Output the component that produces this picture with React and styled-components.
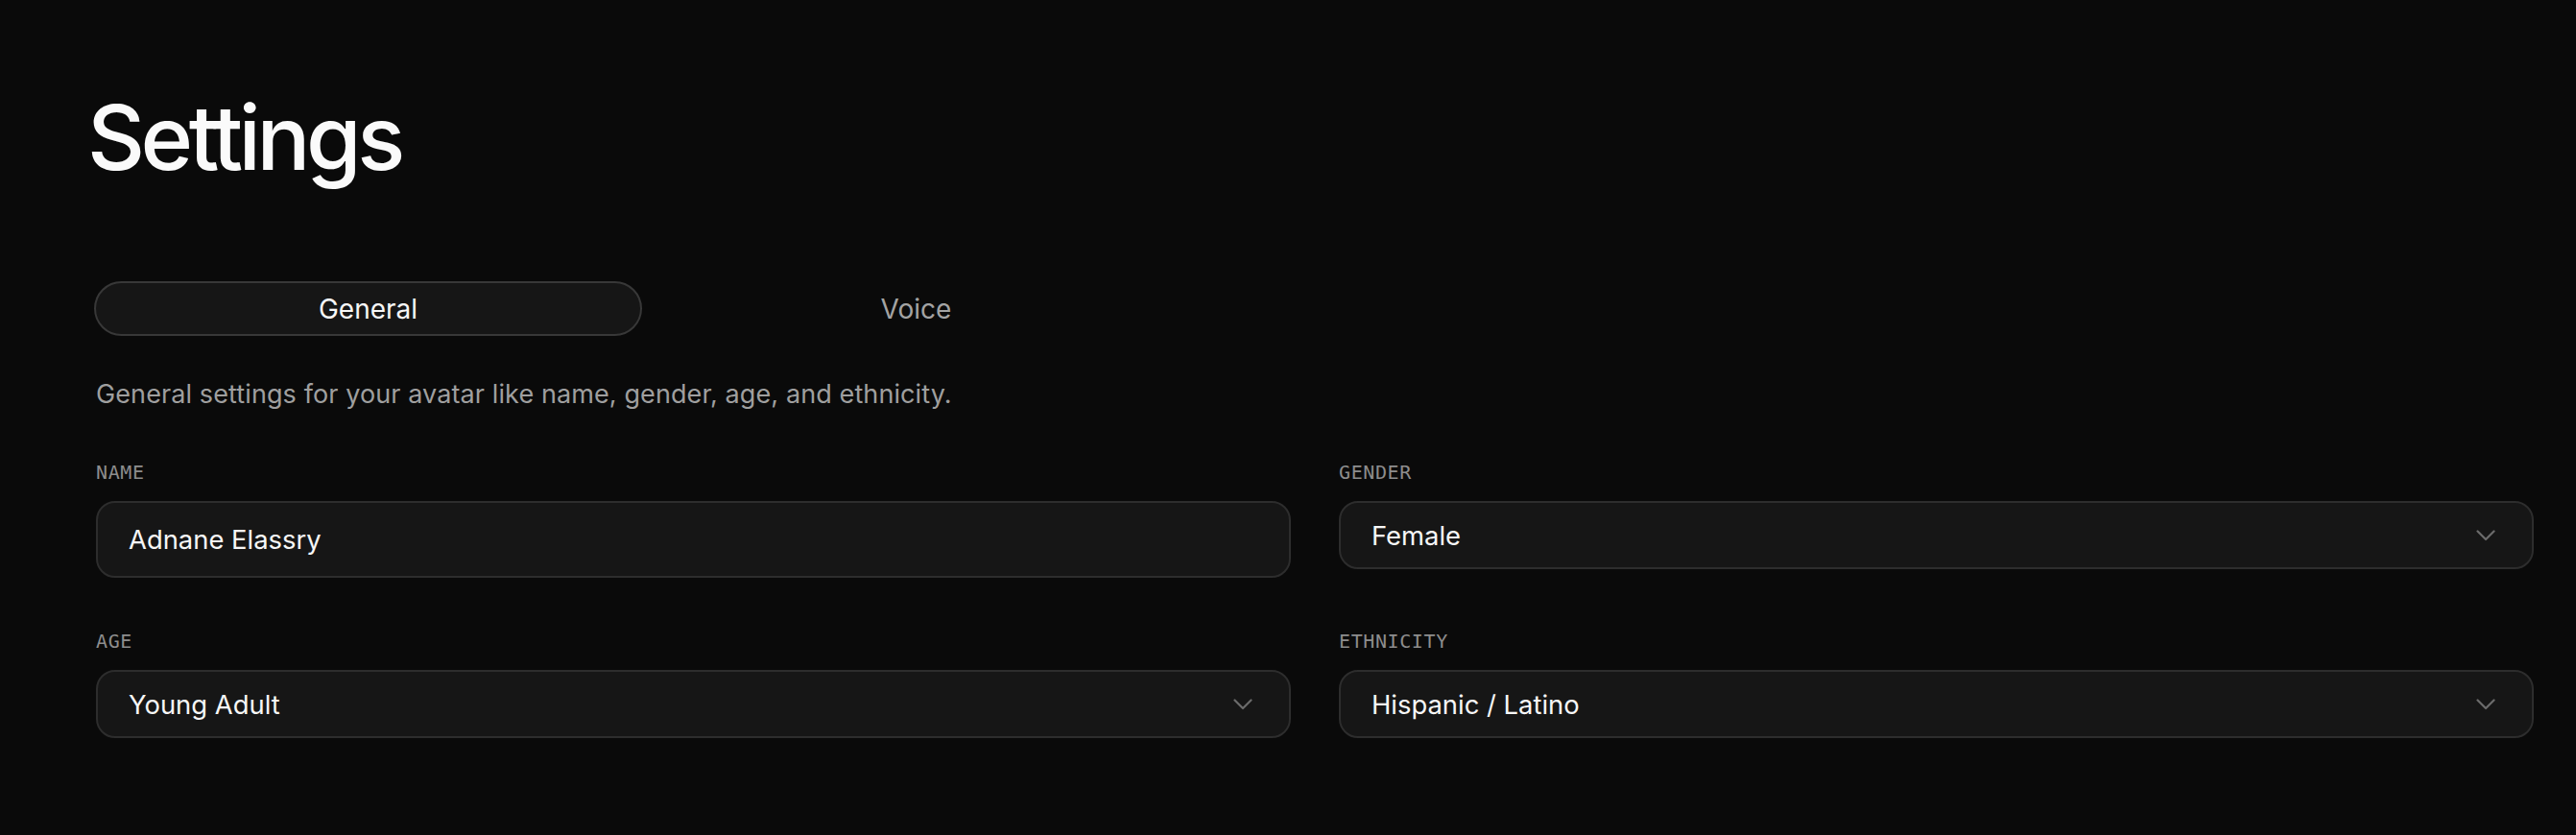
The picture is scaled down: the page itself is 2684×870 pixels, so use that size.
import React, { useState } from 'react';
import styled, { createGlobalStyle } from 'styled-components';

const GlobalStyle = createGlobalStyle`
  html, body {
    margin: 0;
    padding: 0;
    background: #0a0a0a;
  }
  body {
    font-family: Inter, "Noto Sans", "Liberation Sans", sans-serif;
    color: #f5f5f5;
  }
`;

const Page = styled.div`
  box-sizing: border-box;
  padding: 96px 44px 60px 100px;
  background: #0a0a0a;
`;

const Title = styled.h1`
  margin: 0 0 0 -9px;
  font-size: 93px;
  line-height: 94px;
  font-weight: 500;
  letter-spacing: -0.048em;
  color: #fafafa;
`;

const TabList = styled.div`
  display: grid;
  grid-template-columns: 1fr 1fr;
  width: 1142px;
  margin: 103px 0 0 -2px;
`;

const Tab = styled.button`
  height: 57px;
  box-sizing: border-box;
  border-radius: 999px;
  border: 2px solid ${p => (p.$active ? '#383838' : 'transparent')};
  background: ${p => (p.$active ? '#161616' : 'transparent')};
  color: ${p => (p.$active ? '#f7f7f7' : '#a3a3a3')};
  font-family: inherit;
  font-size: 28px;
  font-weight: 400;
  cursor: pointer;
`;

const Description = styled.p`
  margin: 43px 0 0;
  font-size: 27px;
  line-height: 36px;
  letter-spacing: 0.1px;
  color: #9f9f9f;
`;

const FieldGrid = styled.div`
  display: grid;
  grid-template-columns: 1fr 1fr;
  column-gap: 50px;
  row-gap: 54px;
  margin-top: 51px;
  align-items: start;
`;

const Field = styled.div`
  display: flex;
  flex-direction: column;
  gap: 18px;
`;

const Label = styled.label`
  font-family: "DejaVu Sans Mono", "Liberation Mono", monospace;
  font-size: 20px;
  line-height: 24px;
  letter-spacing: 0.03em;
  color: #8d8d8d;
`;

const TextInput = styled.input`
  height: 80px;
  box-sizing: border-box;
  width: 100%;
  padding: 0 32px;
  border-radius: 20px;
  border: 2px solid #2d2d2d;
  background: #161616;
  color: #f7f7f7;
  font-family: inherit;
  font-size: 27.4px;
  outline: none;
`;

const SelectTrigger = styled.button`
  height: 71px;
  box-sizing: border-box;
  width: 100%;
  display: flex;
  align-items: center;
  justify-content: space-between;
  padding: 0 38px 0 32px;
  border-radius: 20px;
  border: 2px solid #2d2d2d;
  background: #161616;
  color: #f7f7f7;
  font-family: inherit;
  font-size: 27.4px;
  cursor: pointer;
`;

const Chevron = () => (
  <svg width="20" height="12" viewBox="0 0 20 12" fill="none">
    <polyline points="1.5,1.5 10,10 18.5,1.5" stroke="#6b6b6b" strokeWidth="2.2" strokeLinecap="round" strokeLinejoin="round" />
  </svg>
);

const Select = ({ value }) => (
  <SelectTrigger type="button">
    <span>{value}</span>
    <Chevron />
  </SelectTrigger>
);

export default function App() {
  const [tab, setTab] = useState('general');
  const [name, setName] = useState('Adnane Elassry');

  return (
    <Page>
      <GlobalStyle />
      <Title>Settings</Title>
      <TabList>
        <Tab $active={tab === 'general'} onClick={() => setTab('general')}>General</Tab>
        <Tab $active={tab === 'voice'} onClick={() => setTab('voice')}>Voice</Tab>
      </TabList>
      <Description>General settings for your avatar like name, gender, age, and ethnicity.</Description>
      <FieldGrid>
        <Field>
          <Label>NAME</Label>
          <TextInput value={name} onChange={e => setName(e.target.value)} />
        </Field>
        <Field>
          <Label>GENDER</Label>
          <Select value="Female" />
        </Field>
        <Field>
          <Label>AGE</Label>
          <Select value="Young Adult" />
        </Field>
        <Field>
          <Label>ETHNICITY</Label>
          <Select value="Hispanic / Latino" />
        </Field>
      </FieldGrid>
    </Page>
  );
}
